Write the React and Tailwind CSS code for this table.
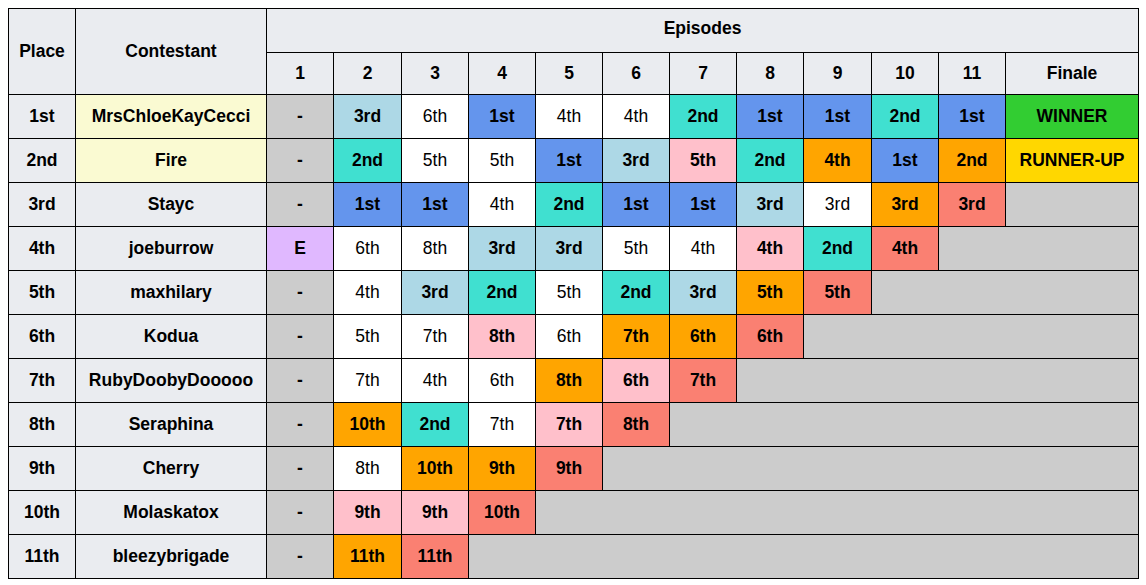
import React from 'react';

const bg = {
  w: "bg-white font-normal",
  lb: "bg-[#add8e6] font-bold",
  cb: "bg-[#6495ed] font-bold",
  tq: "bg-[#40e0d0] font-bold",
  pk: "bg-[#ffc0cb] font-bold",
  or: "bg-[#ffa500] font-bold",
  sa: "bg-[#fa8072] font-bold",
  gr: "bg-[#cccccc] font-bold",
  e: "bg-[#e0b8ff] font-bold",
  win: "bg-[#32cd32] font-bold",
  ru: "bg-[#ffd700] font-bold",
};

const rows = [
  { place: "1st", name: "MrsChloeKayCecci", top: true, cells: [["-", "gr"], ["3rd", "lb"], ["6th", "w"], ["1st", "cb"], ["4th", "w"], ["4th", "w"], ["2nd", "tq"], ["1st", "cb"], ["1st", "cb"], ["2nd", "tq"], ["1st", "cb"], ["WINNER", "win"]] },
  { place: "2nd", name: "Fire", top: true, cells: [["-", "gr"], ["2nd", "tq"], ["5th", "w"], ["5th", "w"], ["1st", "cb"], ["3rd", "lb"], ["5th", "pk"], ["2nd", "tq"], ["4th", "or"], ["1st", "cb"], ["2nd", "or"], ["RUNNER-UP", "ru"]] },
  { place: "3rd", name: "Stayc", cells: [["-", "gr"], ["1st", "cb"], ["1st", "cb"], ["4th", "w"], ["2nd", "tq"], ["1st", "cb"], ["1st", "cb"], ["3rd", "lb"], ["3rd", "w"], ["3rd", "or"], ["3rd", "sa"], ["", "gr"]] },
  { place: "4th", name: "joeburrow", cells: [["E", "e"], ["6th", "w"], ["8th", "w"], ["3rd", "lb"], ["3rd", "lb"], ["5th", "w"], ["4th", "w"], ["4th", "pk"], ["2nd", "tq"], ["4th", "sa"]], out: 2 },
  { place: "5th", name: "maxhilary", cells: [["-", "gr"], ["4th", "w"], ["3rd", "lb"], ["2nd", "tq"], ["5th", "w"], ["2nd", "tq"], ["3rd", "lb"], ["5th", "or"], ["5th", "sa"]], out: 3 },
  { place: "6th", name: "Kodua", cells: [["-", "gr"], ["5th", "w"], ["7th", "w"], ["8th", "pk"], ["6th", "w"], ["7th", "or"], ["6th", "or"], ["6th", "sa"]], out: 4 },
  { place: "7th", name: "RubyDoobyDooooo", cells: [["-", "gr"], ["7th", "w"], ["4th", "w"], ["6th", "w"], ["8th", "or"], ["6th", "pk"], ["7th", "sa"]], out: 5 },
  { place: "8th", name: "Seraphina", cells: [["-", "gr"], ["10th", "or"], ["2nd", "tq"], ["7th", "w"], ["7th", "pk"], ["8th", "sa"]], out: 6 },
  { place: "9th", name: "Cherry", cells: [["-", "gr"], ["8th", "w"], ["10th", "or"], ["9th", "or"], ["9th", "sa"]], out: 7 },
  { place: "10th", name: "Molaskatox", cells: [["-", "gr"], ["9th", "pk"], ["9th", "pk"], ["10th", "sa"]], out: 8 },
  { place: "11th", name: "bleezybrigade", cells: [["-", "gr"], ["11th", "or"], ["11th", "sa"]], out: 9 },
];

const widths = [67, 191, 67, 68, 67, 67, 67, 67, 67, 67, 68, 67, 67, 133];
const episodes = ["1", "2", "3", "4", "5", "6", "7", "8", "9", "10", "11", "Finale"];

const cell = "border border-black text-center align-middle px-0 pt-0 pb-[2px]";

export default function App() {
  return (
    <div className="bg-white p-2 text-black text-[17.5px] leading-5 font-['Liberation_Sans',Arial,sans-serif]">
      <table className="table-fixed border-collapse border border-black w-[1131px]">
        <colgroup>
          {widths.map((w, i) => (
            <col key={i} style={{ width: w }} />
          ))}
        </colgroup>
        <thead>
          <tr className="h-[44px] bg-[#eaecf0]">
            <th rowSpan={2} className={cell + " font-bold"}>Place</th>
            <th rowSpan={2} className={cell + " font-bold"}>Contestant</th>
            <th colSpan={12} className="border border-black text-center align-middle px-0 pt-0 pb-[6px] font-bold">Episodes</th>
          </tr>
          <tr className="h-[42px] bg-[#eaecf0]">
            {episodes.map((ep) => (
              <th key={ep} className={cell + " font-bold"}>{ep}</th>
            ))}
          </tr>
        </thead>
        <tbody>
          {rows.map((row) => (
            <tr key={row.place} className="h-[44px]">
              <td className={cell + " bg-[#eaecf0] font-bold"}>{row.place}</td>
              <td className={cell + " font-bold " + (row.top ? "bg-[#fafad2]" : "bg-[#eaecf0]")}>{row.name}</td>
              {row.cells.map(([txt, c], i) => (
                <td key={i} className={cell + " " + bg[c]}>{txt}</td>
              ))}
              {row.out && <td colSpan={row.out} className={cell + " bg-[#cccccc]"}></td>}
            </tr>
          ))}
        </tbody>
      </table>
    </div>
  );
}
